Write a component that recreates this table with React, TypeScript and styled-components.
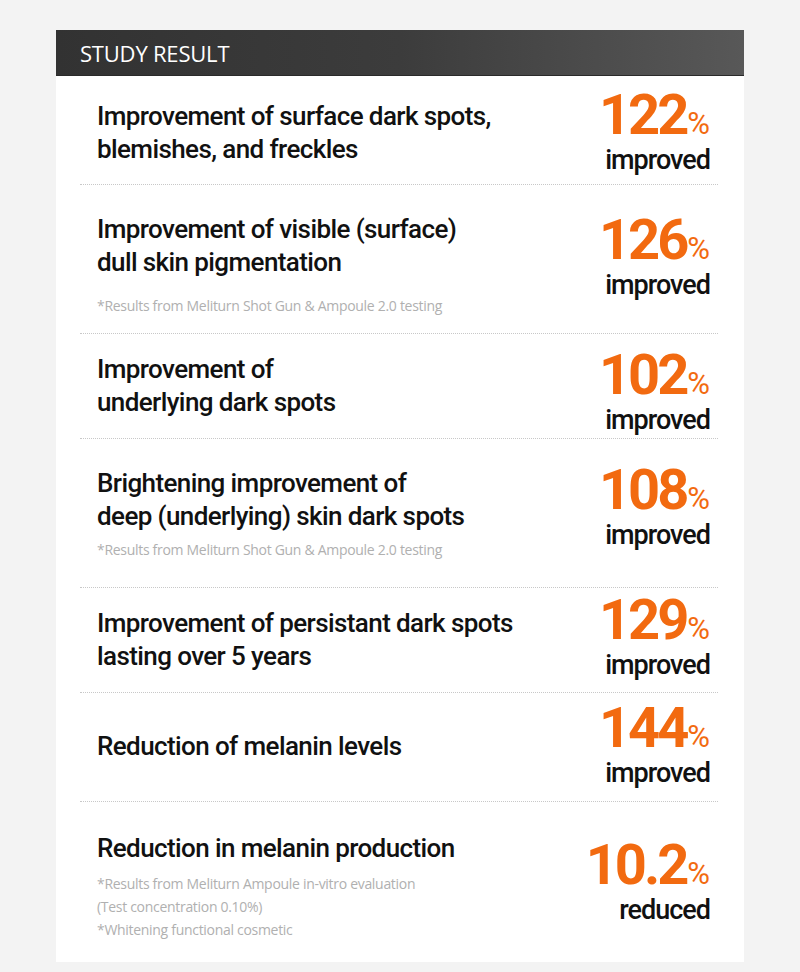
import React from "react";
import styled, { createGlobalStyle } from "styled-components";

const GlobalStyle = createGlobalStyle`
  html, body {
    margin: 0;
    padding: 0;
    background: #f3f3f3;
  }
`;

const Page = styled.div`
  width: 800px;
  height: 972px;
  padding-top: 30px;
  box-sizing: border-box;
  background: #f3f3f3;
  overflow: hidden;
`;

const Card = styled.section`
  margin-left: 56px;
  width: 688px;
  background: #ffffff;
`;

const Header = styled.h2`
  margin: 0;
  height: 46px;
  display: flex;
  align-items: center;
  padding-left: 24px;
  background: linear-gradient(90deg, #323232 0%, #3c3c3c 50%, #585858 100%);
  border-bottom: 1px solid #2a2a2a;
  box-sizing: border-box;
  color: #ffffff;
  font-family: "Open Sans", sans-serif;
  font-weight: 400;
  font-size: 22px;
  letter-spacing: -0.2px;
`;

const List = styled.div`
  padding: 0 26px 0 24px;
`;

interface RowProps {
  $h: number;
  $last?: boolean;
}

const Row = styled.div<RowProps>`
  display: flex;
  justify-content: space-between;
  align-items: flex-start;
  height: ${({ $h }) => $h}px;
  box-sizing: border-box;
  border-bottom: ${({ $last }) => ($last ? "none" : "1px dotted #c8c8c8")};
`;

const Left = styled.div<{ $top: number }>`
  padding-left: 17px;
  padding-top: ${({ $top }) => $top}px;
`;

const Title = styled.div`
  font-family: Roboto, "Noto Sans", sans-serif;
  font-weight: 500;
  font-size: 26px;
  line-height: 33px;
  letter-spacing: -0.6px;
  color: #111111;
`;

const Notes = styled.div<{ $top: number }>`
  margin-top: ${({ $top }) => $top}px;
`;

const Note = styled.div`
  font-family: "Open Sans", sans-serif;
  font-weight: 400;
  font-size: 14px;
  line-height: 23px;
  letter-spacing: -0.3px;
  color: #b0b0b0;
`;

const Right = styled.div<{ $top: number }>`
  margin-top: ${({ $top }) => $top}px;
  padding-right: 8px;
  text-align: right;
`;

const Value = styled.div`
  font-family: Roboto, "Noto Sans", sans-serif;
  font-weight: 700;
  font-size: 56px;
  line-height: 42px;
  letter-spacing: -3px;
  color: #f26a10;
  white-space: nowrap;
`;

const Percent = styled.span`
  font-size: 31px;
  font-weight: 400;
  letter-spacing: 0;
  margin-left: 1px;
`;

const Label = styled.div`
  font-family: Roboto, "Noto Sans", sans-serif;
  font-weight: 500;
  font-size: 27px;
  line-height: 30px;
  letter-spacing: -1px;
  color: #111111;
`;

type Result = {
  title: string[];
  notes?: string[];
  value: string;
  label: string;
  h: number;
  titleTop: number;
  noteTop?: number;
  valueTop: number;
};

const shotGun = "*Results from Meliturn Shot Gun & Ampoule 2.0 testing";

const results: Result[] = [
  {
    title: ["Improvement of surface dark spots,", "blemishes, and freckles"],
    value: "122",
    label: "improved",
    h: 109,
    titleTop: 24,
    valueTop: 18,
  },
  {
    title: ["Improvement of visible (surface)", "dull skin pigmentation"],
    notes: [shotGun],
    value: "126",
    label: "improved",
    h: 149,
    titleTop: 28,
    noteTop: 15,
    valueTop: 34,
  },
  {
    title: ["Improvement of", "underlying dark spots"],
    value: "102",
    label: "improved",
    h: 105,
    titleTop: 19,
    valueTop: 20,
  },
  {
    title: ["Brightening improvement of", "deep (underlying) skin dark spots"],
    notes: [shotGun],
    value: "108",
    label: "improved",
    h: 149,
    titleTop: 28,
    noteTop: 5,
    valueTop: 30,
  },
  {
    title: ["Improvement of persistant dark spots", "lasting over 5 years"],
    value: "129",
    label: "improved",
    h: 105,
    titleTop: 19,
    valueTop: 11,
  },
  {
    title: ["Reduction of melanin levels"],
    value: "144",
    label: "improved",
    h: 109,
    titleTop: 37,
    valueTop: 14,
  },
  {
    title: ["Reduction in melanin production"],
    notes: [
      "*Results from Meliturn Ampoule in-vitro evaluation",
      "(Test concentration 0.10%)",
      "*Whitening functional cosmetic",
    ],
    value: "10.2",
    label: "reduced",
    h: 160,
    titleTop: 30,
    noteTop: 7,
    valueTop: 42,
  },
];

export default function App() {
  return (
    <>
      <GlobalStyle />
      <Page>
        <Card>
          <Header>STUDY RESULT</Header>
          <List>
            {results.map((r, i) => (
              <Row key={r.value} $h={r.h} $last={i === results.length - 1}>
                <Left $top={r.titleTop}>
                  {r.title.map((line) => (
                    <Title key={line}>{line}</Title>
                  ))}
                  {r.notes && (
                    <Notes $top={r.noteTop ?? 0}>
                      {r.notes.map((n) => (
                        <Note key={n}>{n}</Note>
                      ))}
                    </Notes>
                  )}
                </Left>
                <Right $top={r.valueTop}>
                  <Value>
                    {r.value}
                    <Percent>%</Percent>
                  </Value>
                  <Label>{r.label}</Label>
                </Right>
              </Row>
            ))}
          </List>
        </Card>
      </Page>
    </>
  );
}
